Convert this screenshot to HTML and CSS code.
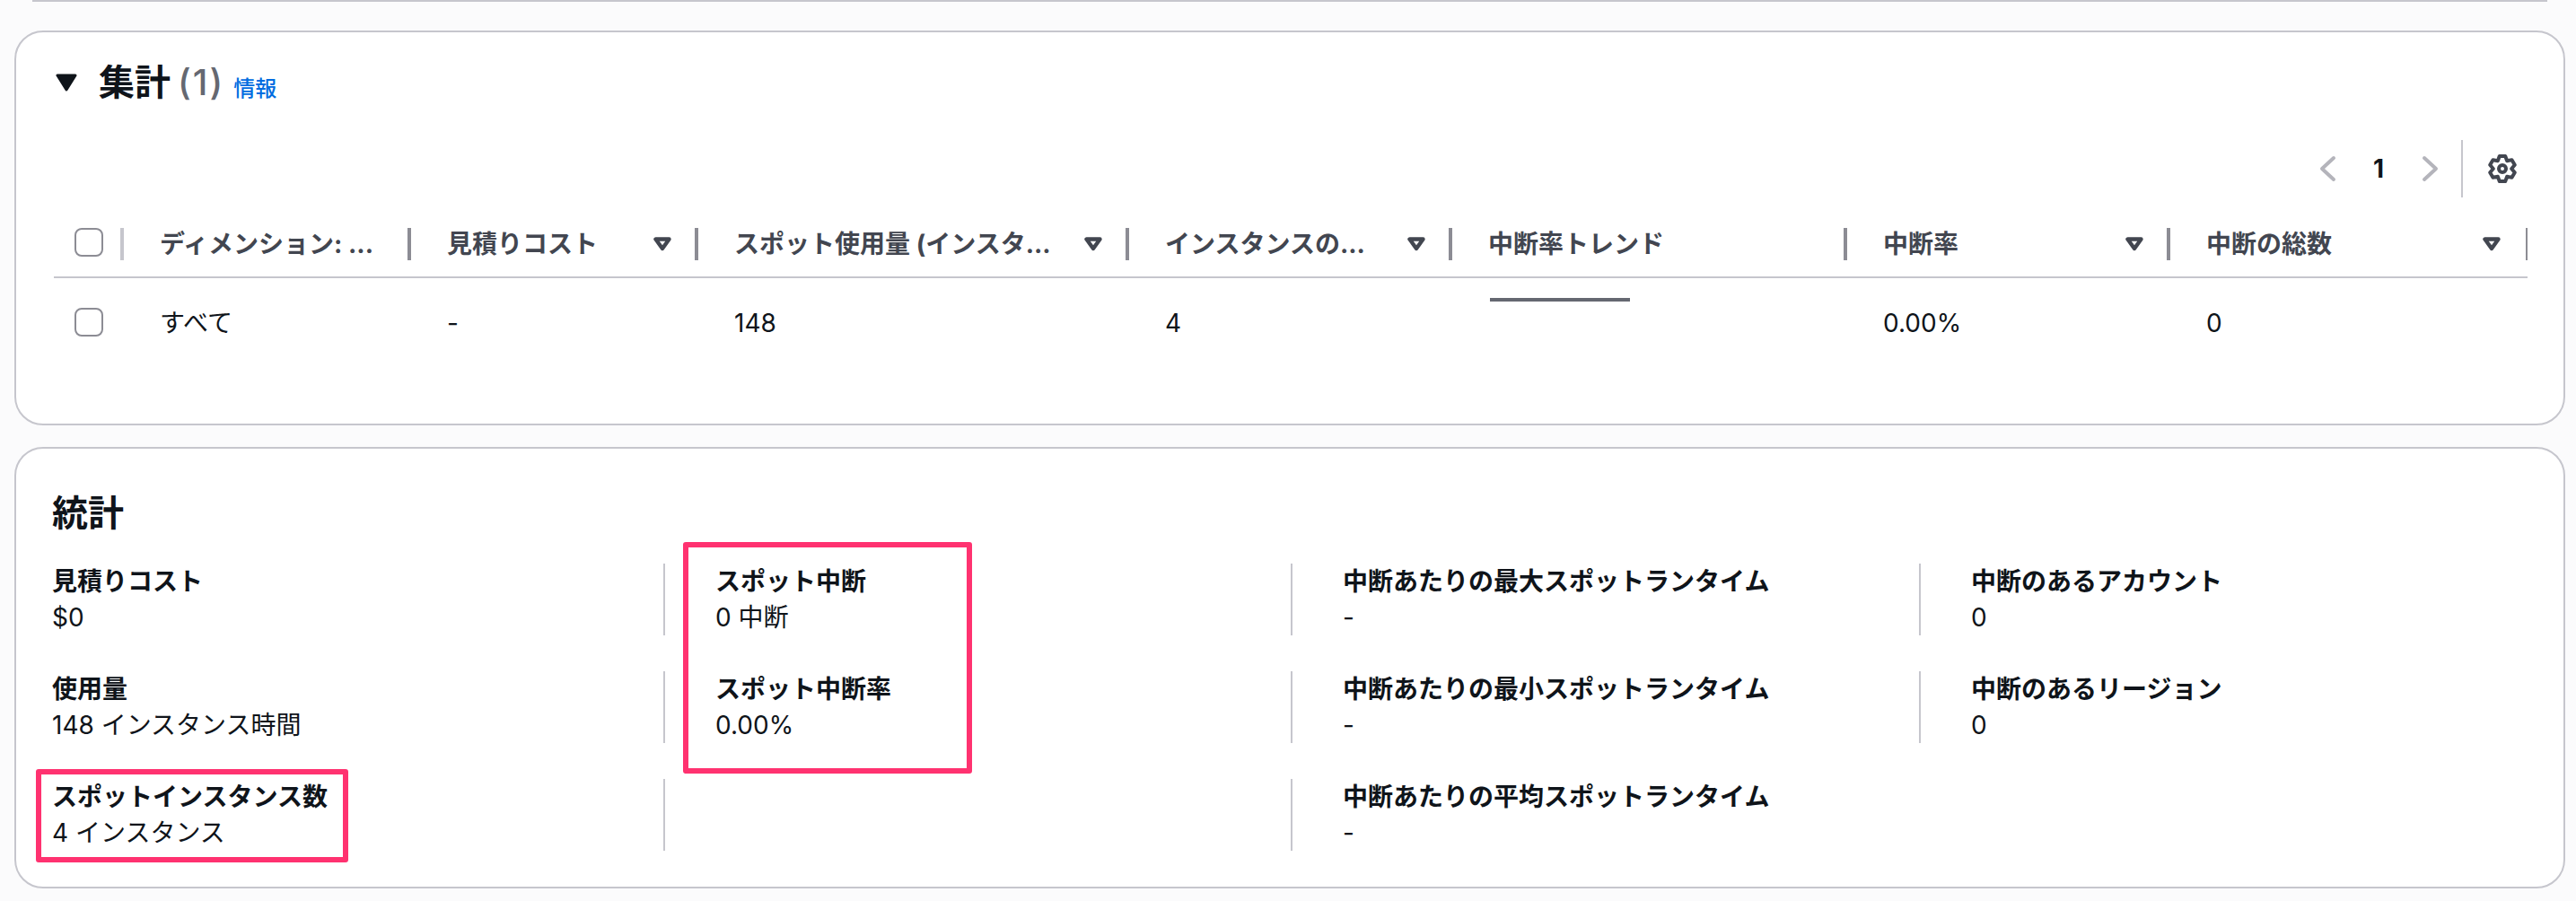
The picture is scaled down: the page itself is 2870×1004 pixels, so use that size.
FILE: index.html
```html
<!DOCTYPE html>
<html lang="ja">
<head>
<meta charset="utf-8">
<title>集計</title>
<link rel="stylesheet" href="styles.css">
</head>
<body>
<div class="prev-card"></div>

<section class="card card-summary">
  <div class="heading">
    <svg class="caret" width="24" height="20" viewBox="0 0 24 20"><polygon points="2,2 22,2 12,18"/></svg>
    <h2 class="title">集計</h2>
    <span class="count">(1)</span>
    <a class="info">情報</a>
  </div>

  <div class="pager">
    <svg class="chev" width="32" height="32" viewBox="0 0 32 32"><polyline points="22,4 9,16 22,28"/></svg>
    <span class="page-num">1</span>
    <svg class="chev" width="32" height="32" viewBox="0 0 32 32"><polyline points="10,4 23,16 10,28"/></svg>
    <span class="pager-sep"></span>
    <svg class="gear" width="32" height="32" viewBox="0 0 16 16">
      <polygon points="6.38,.99 9.62,.99 10.55,3.58 13.26,3.09 14.88,5.9 13.1,8 14.88,10.1 13.26,12.91 10.55,12.42 9.62,15.01 6.38,15.01 5.45,12.42 2.74,12.91 1.12,10.1 2.9,8 1.12,5.9 2.74,3.09 5.45,3.58"/>
      <circle cx="8" cy="8" r="2"/>
    </svg>
  </div>

  <div class="table">
    <div class="row head-row">
      <div class="th th-check"><span class="check"></span></div>
      <div class="th">ディメンション: ...</div>
      <div class="th"><span>見積りコスト</span><svg class="sort" width="20" height="16" viewBox="0 0 20 16"><polygon points="2.5,2.5 17.5,2.5 10,13"/></svg></div>
      <div class="th"><span>スポット使用量 (インスタ...</span><svg class="sort" width="20" height="16" viewBox="0 0 20 16"><polygon points="2.5,2.5 17.5,2.5 10,13"/></svg></div>
      <div class="th"><span>インスタンスの...</span><svg class="sort" width="20" height="16" viewBox="0 0 20 16"><polygon points="2.5,2.5 17.5,2.5 10,13"/></svg></div>
      <div class="th">中断率トレンド</div>
      <div class="th"><span>中断率</span><svg class="sort" width="20" height="16" viewBox="0 0 20 16"><polygon points="2.5,2.5 17.5,2.5 10,13"/></svg></div>
      <div class="th th-last"><span>中断の総数</span><svg class="sort" width="20" height="16" viewBox="0 0 20 16"><polygon points="2.5,2.5 17.5,2.5 10,13"/></svg></div>
    </div>
    <div class="row body-row">
      <div class="td td-check"><span class="check"></span></div>
      <div class="td">すべて</div>
      <div class="td">-</div>
      <div class="td">148</div>
      <div class="td">4</div>
      <div class="td td-trend"><span class="trend"></span></div>
      <div class="td">0.00%</div>
      <div class="td">0</div>
    </div>
  </div>
</section>

<section class="card card-stats">
  <h2 class="title stats-title">統計</h2>
  <div class="stats">
    <div class="stat stat-first"><div class="label">見積りコスト</div><div class="value">$0</div></div>
    <div class="stat"><div class="label">スポット中断</div><div class="value">0 中断</div></div>
    <div class="stat"><div class="label">中断あたりの最大スポットランタイム</div><div class="value">-</div></div>
    <div class="stat"><div class="label">中断のあるアカウント</div><div class="value">0</div></div>

    <div class="stat stat-first"><div class="label">使用量</div><div class="value">148 インスタンス時間</div></div>
    <div class="stat"><div class="label">スポット中断率</div><div class="value">0.00%</div></div>
    <div class="stat"><div class="label">中断あたりの最小スポットランタイム</div><div class="value">-</div></div>
    <div class="stat"><div class="label">中断のあるリージョン</div><div class="value">0</div></div>

    <div class="stat stat-first"><div class="label">スポットインスタンス数</div><div class="value">4 インスタンス</div></div>
    <div class="stat"></div>
    <div class="stat"><div class="label">中断あたりの平均スポットランタイム</div><div class="value">-</div></div>
  </div>
  <div class="mark mark-interrupt"></div>
  <div class="mark mark-instances"></div>
</section>
</body>
</html>
```

FILE: styles.css
```css
* { box-sizing: border-box; }

html, body { height: 100%; }

body {
  margin: 0;
  background: #fbfbfc;
  color: #0f141a;
  font-family: Inter, "Noto Sans CJK JP", sans-serif;
  font-size: 28px;
  line-height: 40px;
  overflow: hidden;
}

.prev-card {
  height: 2px;
  margin: 0 32px 32px 36px;
  background: #c6c6cd;
}

.card {
  margin: 0 12px 0 16px;
  background: #fff;
  border: 2px solid #c6c6cd;
  border-radius: 32px;
}

/* summary card */
.card-summary {
  height: 440px;
  padding: 36px 40px 0 42px;
}

.heading {
  display: flex;
  align-items: center;
  height: 40px;
}

.caret { margin: 0 24px 0 2px; flex: none; }
.caret polygon { fill: #0f141a; stroke: #0f141a; stroke-width: 3; stroke-linejoin: round; }

.title {
  margin: 0;
  font-size: 40px;
  line-height: 48px;
  font-weight: 700;
}

.count {
  margin-left: 8px;
  font-size: 40px;
  line-height: 48px;
  font-weight: 500;
  letter-spacing: 2px;
  color: #656871;
}

.info {
  margin-left: 10px;
  font-size: 24px;
  line-height: 32px;
  font-weight: 500;
  color: #006ce0;
  padding-top: 14px;
}

.pager {
  display: flex;
  align-items: center;
  justify-content: flex-end;
  height: 64px;
  margin-top: 44px;
  padding-right: 12px;
}

.chev polyline { fill: none; stroke: #b4b4bb; stroke-width: 4; stroke-linecap: round; stroke-linejoin: round; }

.page-num {
  width: 40px;
  margin: 0 21px 0 20px;
  text-align: center;
  font-weight: 700;
}

.pager-sep {
  width: 2px;
  height: 64px;
  margin: 0 28px 0 19px;
  background: #c6c6cd;
}

.gear polygon, .gear circle { fill: none; stroke: #424650; stroke-width: 2; stroke-linejoin: round; }

/* table */
.table { margin-top: 34px; }

.row {
  display: grid;
  grid-template-columns: 78px 320px 320px 480px 360px 440px 360px 398px;
}

.head-row {
  padding-bottom: 18px;
  border-bottom: 2px solid #c6c6cd;
}

.th {
  display: flex;
  align-items: center;
  justify-content: space-between;
  height: 36px;
  padding: 0 26px 0 40px;
  border-right: 4px solid #8c8c94;
  color: #424650;
  font-weight: 700;
  white-space: nowrap;
}

.th-check {
  padding: 0 0 0 23px;
  border-right-color: #c6c6cd;
  align-items: flex-start;
}

.th-last { border-right-width: 2px; padding-right: 28px; }

.check {
  display: block;
  width: 32px;
  height: 32px;
  border: 2px solid #8c8c94;
  border-radius: 8px;
  background: #fff;
}

.body-row { align-items: start; }

.td {
  margin-top: 30px;
  padding-left: 40px;
  white-space: nowrap;
}

.td-check {
  margin-top: 33px;
  padding-left: 23px;
}

.td-trend {
  margin-top: 22px;
  padding-left: 42px;
}

.trend {
  display: block;
  width: 156px;
  height: 4px;
  background: #656871;
}

.sort { flex: none; }
.sort polygon { fill: none; stroke: #424650; stroke-width: 4.4; stroke-linejoin: round; }

/* stats card */
.card-stats {
  position: relative;
  margin-top: 24px;
  height: 492px;
  padding: 48px 40px 0 40px;
}

.stats {
  display: grid;
  grid-template-columns: 681px 699px 700px 1fr;
  grid-auto-rows: 80px;
  row-gap: 40px;
  margin-top: 32px;
}

.stat {
  padding-left: 56px;
  border-left: 2px solid #c6c6cd;
}

.stat-first { padding-left: 0; border-left: 0; }

.label { font-weight: 700; white-space: nowrap; }
.value { white-space: nowrap; }

/* annotation rectangles */
.mark {
  position: absolute;
  border: 6px solid #ff3270;
  border-radius: 3px;
}

.mark-interrupt { left: 743px; top: 104px; width: 322px; height: 258px; }
.mark-instances { left: 22px; top: 357px; width: 348px; height: 104px; }
```
